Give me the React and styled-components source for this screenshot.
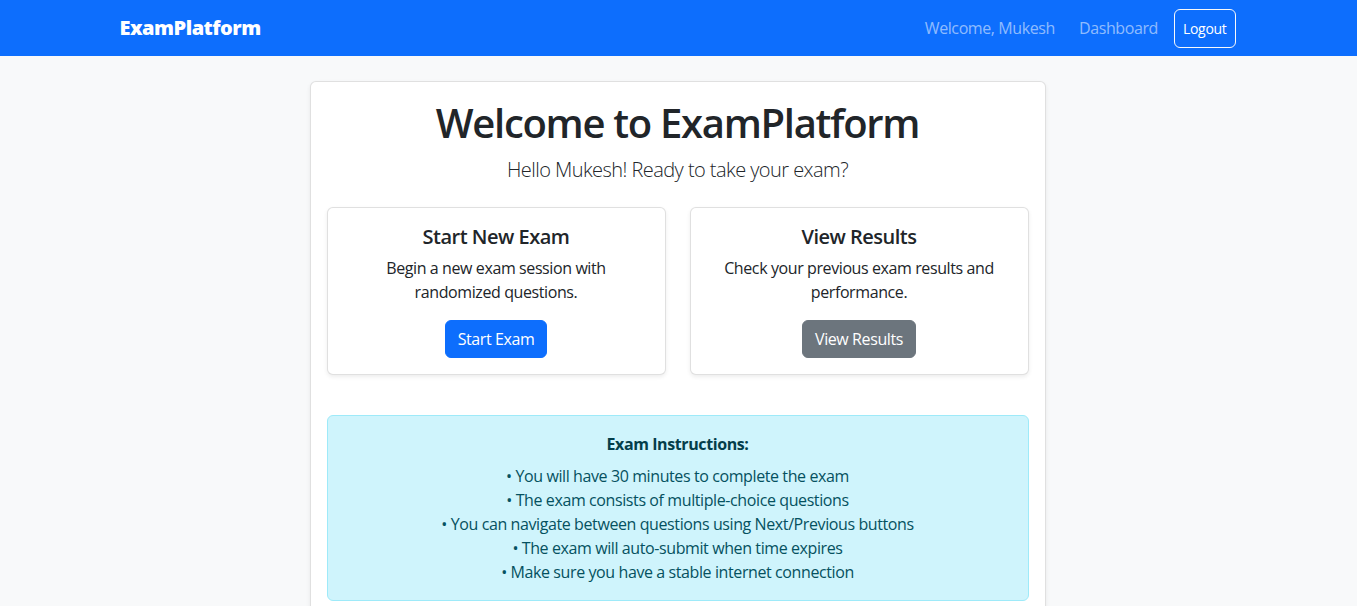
import React from "react";
import styled, { createGlobalStyle } from "styled-components";

const GlobalStyle = createGlobalStyle`
  * { box-sizing: border-box; }
  body {
    margin: 0;
    background: #f8f9fa;
    color: #212529;
    font-family: "Open Sans", "Noto Sans", sans-serif;
    font-size: 16px;
    line-height: 1.5;
    letter-spacing: -0.4px;
  }
`;

const Navbar = styled.nav`
  background: #0d6efd;
  height: 56px;
  padding: 8px 0;
`;

const NavContainer = styled.div`
  max-width: 1140px;
  margin: 0 auto;
  padding: 0 13px 0 11px;
  height: 40px;
  display: flex;
  align-items: center;
  justify-content: space-between;
`;

const Brand = styled.div`
  color: #fff;
  font-size: 20px;
  font-weight: 800;
  letter-spacing: -0.5px;
`;

const NavRight = styled.div`
  display: flex;
  align-items: center;
`;

const NavText = styled.span`
  color: rgba(255, 255, 255, 0.55);
  font-size: 16px;
  padding: 8px;
  margin-right: ${(p) => (p.$spaced ? "8px" : "0")};
`;

const LogoutButton = styled.button`
  margin-left: 8px;
  background: transparent;
  color: #fff;
  border: 1px solid #f8f9fa;
  border-radius: 6px;
  padding: 8px 8px;
  font-family: inherit;
  font-size: 14px;
  line-height: 21px;
  letter-spacing: -0.3px;
`;

const Main = styled.main`
  width: 736px;
  margin: 25px 0 0 calc(50% - 369px);
`;

const Card = styled.div`
  background: #fff;
  border: 1px solid rgba(0, 0, 0, 0.12);
  border-radius: 6px;
  box-shadow: 0 2px 4px rgba(0, 0, 0, 0.075);
  padding: 16px;
  text-align: center;
`;

const Title = styled.h1`
  margin: 0 0 7px;
  padding-top: 1px;
  font-size: 40px;
  font-weight: 600;
  line-height: 48px;
  letter-spacing: -1.3px;
`;

const Lead = styled.p`
  margin: 0 0 22px;
  padding-top: 1px;
  font-size: 20px;
  font-weight: 300;
  line-height: 30px;
  letter-spacing: -0.55px;
  color: #212529;
`;

const CardRow = styled.div`
  display: grid;
  grid-template-columns: 1fr 1fr;
  gap: 24px;
  margin-bottom: 40px;
`;

const OptionTitle = styled.h5`
  margin: 0 0 7px;
  padding-top: 1px;
  font-size: 20px;
  font-weight: 600;
  line-height: 24px;
  letter-spacing: -0.5px;
`;

const OptionText = styled.p`
  margin: 0 0 16px;
  line-height: 24px;
`;

const ActionButton = styled.button`
  background: ${(p) => (p.$variant === "secondary" ? "#6c757d" : "#0d6efd")};
  color: #fff;
  border: 1px solid ${(p) => (p.$variant === "secondary" ? "#6c757d" : "#0d6efd")};
  border-radius: 6px;
  padding: 6px 12px;
  font-family: inherit;
  font-size: 16px;
  line-height: 24px;
  letter-spacing: -0.4px;
`;

const Alert = styled.div`
  background: #cff4fc;
  border: 1px solid #9eeaf9;
  border-radius: 6px;
  color: #055160;
  padding: 16px;
  text-align: center;
`;

const AlertHeading = styled.h6`
  margin: 0 0 8px;
  font-size: 16px;
  font-weight: 700;
  line-height: 24px;
  color: #043e4a;
`;

const AlertLine = styled.div`
  line-height: 24px;
`;

const instructions = [
  "You will have 30 minutes to complete the exam",
  "The exam consists of multiple-choice questions",
  "You can navigate between questions using Next/Previous buttons",
  "The exam will auto-submit when time expires",
  "Make sure you have a stable internet connection",
];

export default function App() {
  return (
    <>
      <GlobalStyle />
      <Navbar>
        <NavContainer>
          <Brand>ExamPlatform</Brand>
          <NavRight>
            <NavText $spaced>Welcome, Mukesh</NavText>
            <NavText>Dashboard</NavText>
            <LogoutButton>Logout</LogoutButton>
          </NavRight>
        </NavContainer>
      </Navbar>
      <Main>
        <Card>
          <Title>Welcome to ExamPlatform</Title>
          <Lead>Hello Mukesh! Ready to take your exam?</Lead>
          <CardRow>
            <Card>
              <OptionTitle>Start New Exam</OptionTitle>
              <OptionText>Begin a new exam session with randomized questions.</OptionText>
              <ActionButton>Start Exam</ActionButton>
            </Card>
            <Card>
              <OptionTitle>View Results</OptionTitle>
              <OptionText>Check your previous exam results and performance.</OptionText>
              <ActionButton $variant="secondary">View Results</ActionButton>
            </Card>
          </CardRow>
          <Alert>
            <AlertHeading>Exam Instructions:</AlertHeading>
            {instructions.map((line) => (
              <AlertLine key={line}>• {line}</AlertLine>
            ))}
          </Alert>
        </Card>
      </Main>
    </>
  );
}
